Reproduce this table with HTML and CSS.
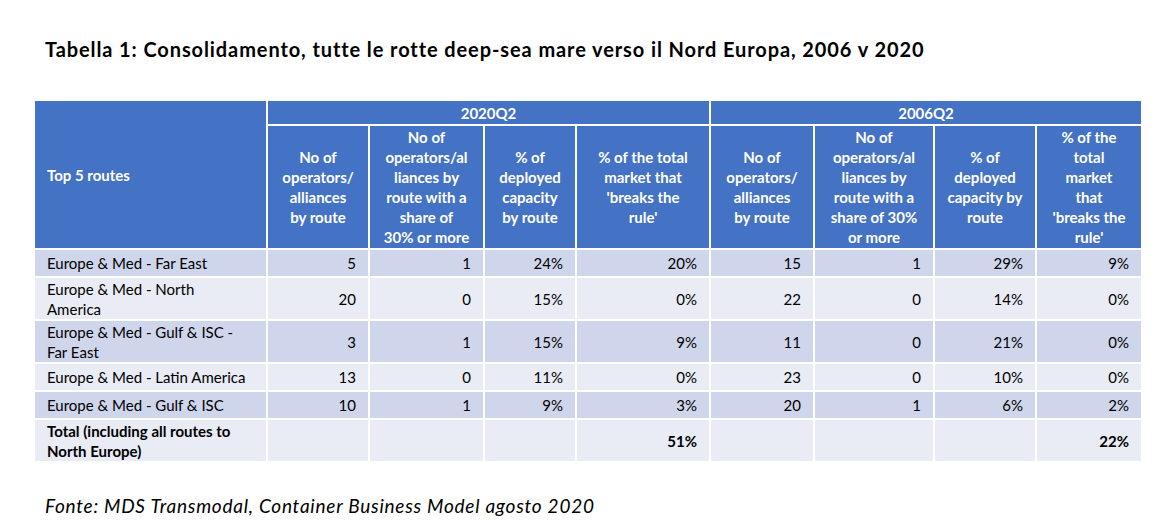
FILE: index.html
```html
<!DOCTYPE html>
<html lang="it">
<head>
<meta charset="utf-8">
<title>Tabella 1</title>
<link rel="stylesheet" href="styles.css">
</head>
<body>
<div class="page">
  <h1 class="title">Tabella 1: Consolidamento, tutte le rotte deep-sea mare verso il Nord Europa, 2006 v 2020</h1>
  <table class="data">
    <colgroup>
      <col class="c-route">
      <col class="c1"><col class="c2"><col class="c3"><col class="c4">
      <col class="c5"><col class="c6"><col class="c7"><col class="c8">
    </colgroup>
    <thead>
      <tr class="h1">
        <th class="routes" rowspan="2">Top 5 routes</th>
        <th colspan="4">2020Q2</th>
        <th colspan="4">2006Q2</th>
      </tr>
      <tr class="h2">
        <th>No of<br>operators/<br>alliances<br>by route</th>
        <th>No of<br>operators/al<br>liances by<br>route with a<br>share of<br>30% or more</th>
        <th>% of<br>deployed<br>capacity<br>by route</th>
        <th>% of the total<br>market that<br>'breaks the<br>rule'</th>
        <th>No of<br>operators/<br>alliances<br>by route</th>
        <th>No of<br>operators/al<br>liances by<br>route with a<br>share of 30%<br>or more</th>
        <th>% of<br>deployed<br>capacity by<br>route</th>
        <th>% of the<br>total<br>market<br>that<br>'breaks the<br>rule'</th>
      </tr>
    </thead>
    <tbody>
      <tr class="dark r1">
        <td class="name">Europe &amp; Med - Far East</td>
        <td>5</td><td>1</td><td>24%</td><td>20%</td>
        <td>15</td><td>1</td><td>29%</td><td>9%</td>
      </tr>
      <tr class="light r2">
        <td class="name">Europe &amp; Med - North<br>America</td>
        <td>20</td><td>0</td><td>15%</td><td>0%</td>
        <td>22</td><td>0</td><td>14%</td><td>0%</td>
      </tr>
      <tr class="dark r2">
        <td class="name">Europe &amp; Med - Gulf &amp; ISC -<br>Far East</td>
        <td>3</td><td>1</td><td>15%</td><td>9%</td>
        <td>11</td><td>0</td><td>21%</td><td>0%</td>
      </tr>
      <tr class="light r1">
        <td class="name">Europe &amp; Med - Latin America</td>
        <td>13</td><td>0</td><td>11%</td><td>0%</td>
        <td>23</td><td>0</td><td>10%</td><td>0%</td>
      </tr>
      <tr class="dark r1">
        <td class="name">Europe &amp; Med - Gulf &amp; ISC</td>
        <td>10</td><td>1</td><td>9%</td><td>3%</td>
        <td>20</td><td>1</td><td>6%</td><td>2%</td>
      </tr>
      <tr class="light r2 total">
        <td class="name">Total (including all routes to<br>North Europe)</td>
        <td></td><td></td><td></td><td>51%</td>
        <td></td><td></td><td></td><td>22%</td>
      </tr>
    </tbody>
  </table>
  <p class="source">Fonte: MDS Transmodal, Container Business Model agosto 2020</p>
</div>
</body>
</html>
```

FILE: styles.css
```css
html, body {
  margin: 0;
  padding: 0;
  background: #ffffff;
}

.page {
  padding: 37px 19px 0 33px;
  font-family: Lato, "Open Sans", sans-serif;
  color: #000;
}

.title {
  margin: 0 0 38px 12px;
  font-size: 20px;
  line-height: 24px;
  font-weight: 700;
  letter-spacing: 0.9px;
  color: #000;
}

.data {
  width: 1108px;
  table-layout: fixed;
  border-collapse: collapse;
  font-size: 15px;
  line-height: 20px;
}

.c-route { width: 233px; }
.c1 { width: 102px; }
.c2 { width: 115px; }
.c3 { width: 92px; }
.c4 { width: 134px; }
.c5 { width: 104px; }
.c6 { width: 120px; }
.c7 { width: 102px; }
.c8 { width: 106px; }

.data th,
.data td {
  border: 2px solid #ffffff;
  padding: 0 12px;
  vertical-align: middle;
}

.data th {
  background: #4472c4;
  color: #ffffff;
  font-weight: 700;
  text-align: center;
  padding: 0 4px;
}

.data th.routes {
  text-align: left;
  padding-left: 12px;
}

.h1 th { height: 23px; }
.h2 th { height: 122px; }

.data td {
  text-align: right;
  color: #000;
}

.data td.name {
  text-align: left;
}

.dark td { background: #cfd5ea; }
.light td { background: #e9ebf5; }

.r1 td { height: 26px; }
.r2 td { height: 41px; }

.total td { font-weight: 700; }

.source {
  margin: 31px 0 0 12px;
  font-size: 19px;
  line-height: 24px;
  font-style: italic;
  letter-spacing: 0.75px;
}
```
